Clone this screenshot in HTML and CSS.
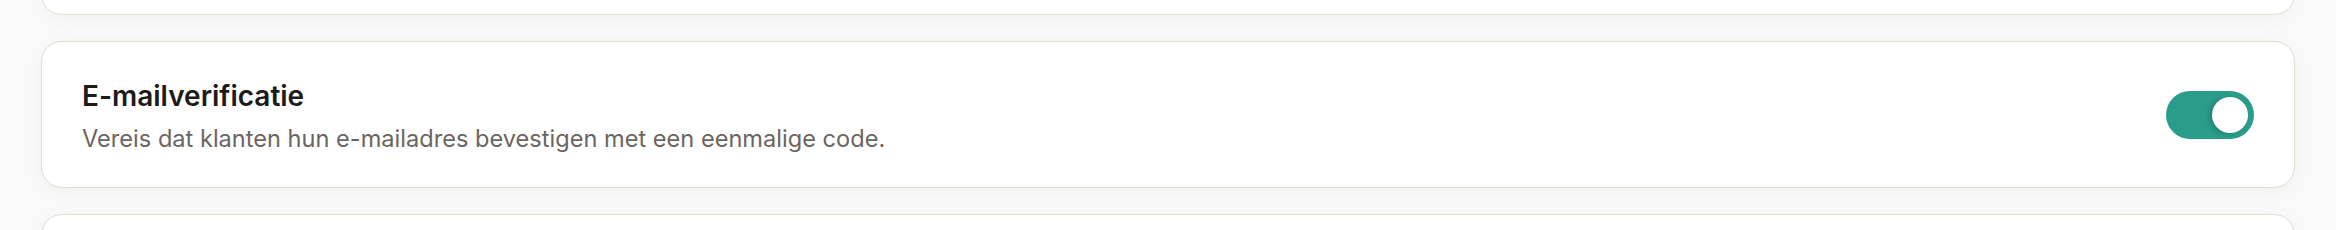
FILE: index.html
```html
<!DOCTYPE html>
<html>
<head>
    <meta charset="UTF-8">
    <title>Instellingen</title>
    <link rel="stylesheet" href="styles.css">
</head>
<body>
    <div class="settings-list">
        <div class="setting-card"></div>

        <div class="setting-card">
            <div class="setting-text">
                <h3 class="setting-title">E-mailverificatie</h3>
                <p class="setting-desc">Vereis dat klanten hun e-mailadres bevestigen met een eenmalige code.</p>
            </div>
            <label class="toggle">
                <input type="checkbox" checked>
                <span class="toggle-track"><span class="toggle-knob"></span></span>
            </label>
        </div>

        <div class="setting-card"></div>
    </div>
</body>
</html>
```

FILE: styles.css
```css
body {
    margin: 0;
    background-color: #f9f9f9;
    font-family: "Inter", "Liberation Sans", sans-serif;
    overflow: hidden;
}

.settings-list {
    display: flex;
    flex-direction: column;
    gap: 26px;
    padding: 0 41px;
    margin-top: -132px;
}

.setting-card {
    display: flex;
    align-items: center;
    justify-content: space-between;
    background-color: #fff;
    border: 1.5px solid #e3dbcd;
    border-radius: 21px;
    padding: 0 40px;
    height: 147px;
    box-sizing: border-box;
    box-shadow: 0 4px 20px rgba(0, 0, 0, 0.035);
}

.setting-text {
    padding-top: 3px;
}

.setting-title {
    margin: 0;
    font-size: 28px;
    font-weight: 600;
    color: #1c1b1a;
    line-height: 38px;
}

.setting-desc {
    margin: 7px 0 0;
    font-size: 23.6px;
    color: #6b655f;
    line-height: 34px;
}

.toggle input {
    display: none;
}

.toggle-track {
    display: flex;
    align-items: center;
    justify-content: flex-end;
    width: 88px;
    height: 48px;
    padding: 0 6px;
    box-sizing: border-box;
    border-radius: 24px;
    background-color: #2a9d8a;
    cursor: pointer;
}

.toggle-knob {
    width: 36px;
    height: 36px;
    border-radius: 50%;
    background-color: #fff;
    box-shadow: -3px 1px 5px rgba(0, 0, 0, 0.18);
}
```
